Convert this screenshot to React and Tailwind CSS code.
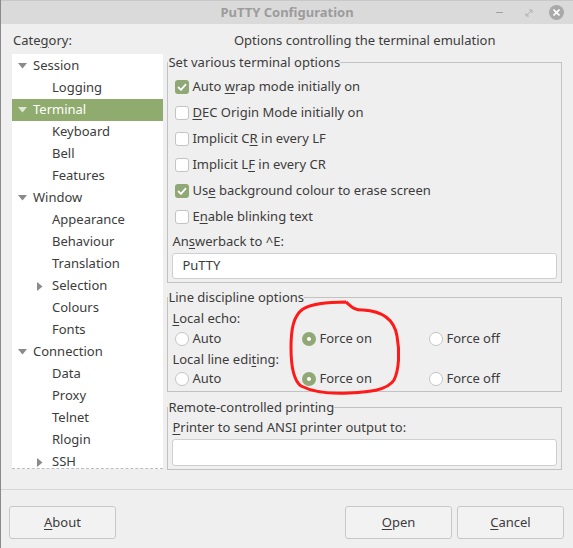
import React from 'react';

const FONT = { fontFamily: '"Noto Sans", "DejaVu Sans", sans-serif' };

function U({ children }) {
  return <span className="underline underline-offset-2">{children}</span>;
}

function Tri({ open }) {
  return open ? (
    <svg width="9" height="6" viewBox="0 0 9 6" className="shrink-0"><path d="M0 0 L9 0 L4.5 5.5 Z" fill="currentColor" /></svg>
  ) : (
    <svg width="6" height="9" viewBox="0 0 6 9" className="shrink-0"><path d="M0 0 L5.5 4.5 L0 9 Z" fill="currentColor" /></svg>
  );
}

const tree = [
  { label: 'Session', lvl: 0, open: true },
  { label: 'Logging', lvl: 1 },
  { label: 'Terminal', lvl: 0, open: true, sel: true },
  { label: 'Keyboard', lvl: 1 },
  { label: 'Bell', lvl: 1 },
  { label: 'Features', lvl: 1 },
  { label: 'Window', lvl: 0, open: true },
  { label: 'Appearance', lvl: 1 },
  { label: 'Behaviour', lvl: 1 },
  { label: 'Translation', lvl: 1 },
  { label: 'Selection', lvl: 1, closed: true },
  { label: 'Colours', lvl: 1 },
  { label: 'Fonts', lvl: 1 },
  { label: 'Connection', lvl: 0, open: true },
  { label: 'Data', lvl: 1 },
  { label: 'Proxy', lvl: 1 },
  { label: 'Telnet', lvl: 1 },
  { label: 'Rlogin', lvl: 1 },
  { label: 'SSH', lvl: 1, closed: true },
];

function Check({ on, children }) {
  return (
    <div className="h-[26px] flex items-center pl-[7px] gap-[3px]">
      {on ? (
        <span className="w-[14px] h-[14px] rounded-[3px] bg-[#8fa876] flex items-center justify-center">
          <svg width="10" height="8" viewBox="0 0 10 8"><path d="M1 4 L4 6.8 L9 1.2" stroke="white" strokeWidth="1.8" fill="none" /></svg>
        </span>
      ) : (
        <span className="w-[14px] h-[14px] rounded-[3px] bg-white border border-[#c4c4c4]" />
      )}
      <span>{children}</span>
    </div>
  );
}

function Radio({ on, children }) {
  return (
    <div className="flex items-center gap-[3px]">
      {on ? (
        <span className="w-[14px] h-[14px] rounded-full bg-[#8fa876] flex items-center justify-center">
          <span className="w-[4px] h-[4px] rounded-full bg-white" />
        </span>
      ) : (
        <span className="w-[14px] h-[14px] rounded-full bg-white border border-[#c4c4c4]" />
      )}
      <span>{children}</span>
    </div>
  );
}

function RadioRow({ className }) {
  return (
    <div className={`grid grid-cols-[127px_127px_127px] pl-[7px] items-center ${className}`}>
      <Radio>Auto</Radio>
      <Radio on>Force on</Radio>
      <Radio>Force off</Radio>
    </div>
  );
}

function Button({ children }) {
  return (
    <div className="h-[33px] w-[107px] rounded-[3px] border border-[#c8c8c8] bg-[#f2f2f2] flex items-center justify-center">
      {children}
    </div>
  );
}

export default function App() {
  return (
    <div className="relative w-[573px] h-[548px] bg-[#efefef] text-[#3c3c3c] text-[13px] overflow-hidden border-l border-[#8a8a8a]" style={FONT}>
      {/* title bar */}
      <div className="h-[24px] bg-[#dadada] border-t border-[#c8c8c8] relative flex items-center justify-center">
        <span className="font-bold text-[#9c9c9c] text-[13px]">PuTTY Configuration</span>
        <div className="absolute right-[9px] top-[4px] flex items-center gap-[16px]">
          <span className="w-[7px] h-[1px] bg-[#a0a0a0] mr-[6px]" />
          <svg width="8" height="8" viewBox="0 0 8 8"><path d="M1 7 L7 1 M4 1 L7 1 L7 4 M1 4 L1 7 L4 7" stroke="#b0b0b0" strokeWidth="1" fill="none" /></svg>
          <span className="w-[15px] h-[15px] rounded-full bg-[#a9a9a9] flex items-center justify-center">
            <svg width="7" height="7" viewBox="0 0 7 7"><path d="M0.5 0.5 L6.5 6.5 M6.5 0.5 L0.5 6.5" stroke="white" strokeWidth="1.6" /></svg>
          </span>
        </div>
      </div>

      <div className="px-[11px]">
        <div className="h-[30px] flex items-end pb-[4px]">
          <div className="w-[156px] pl-px">Cate<U>g</U>ory:</div>
          <div className="w-[396px] text-center">Options controlling the terminal emulation</div>
        </div>

        <div className="flex gap-[4px]">
          {/* tree */}
          <div className="w-[152px] h-[415px] bg-white border-b border-dashed border-[#bdbdbd] pt-[1px]">
            {tree.map(t => (
              <div key={t.label}
                className={`h-[22px] flex items-center ${t.sel ? 'bg-[#8fab6e] text-white' : ''}`}>
                {t.lvl === 0 ? (
                  <div className="flex items-center">
                    <span className={`w-[21px] flex justify-center ${t.sel ? 'text-[#dfe8d5]' : 'text-[#8a8a8a]'}`}><Tri open /></span>
                    <span>{t.label}</span>
                  </div>
                ) : (
                  <div className="flex items-center">
                    <span className="w-[40px] flex justify-end pr-[9px] text-[#8a8a8a]">{t.closed ? <Tri /> : null}</span>
                    <span>{t.label}</span>
                  </div>
                )}
              </div>
            ))}
          </div>

          {/* options */}
          <div className="w-[396px]">
            <fieldset className="border border-[#c2c2c2] h-[229px]">
              <legend className="leading-[17px]">Set various terminal options</legend>
              <div className="pt-[3px]">
                <Check on>Auto <U>w</U>rap mode initially on</Check>
                <Check><U>D</U>EC Origin Mode initially on</Check>
                <Check>Implicit C<U>R</U> in every LF</Check>
                <Check>Implicit L<U>F</U> in every CR</Check>
                <Check on>Us<U>e</U> background colour to erase screen</Check>
                <Check>E<U>n</U>able blinking text</Check>
                <div className="h-[20px] mt-[2px] flex items-center pl-[4px]">An<U>s</U>werback to ^E:</div>
                <div className="mx-[4px] mt-[1px] h-[26px] bg-white border border-[#cfcfcf] rounded-[3px] flex items-center px-[9px]">PuTTY</div>
              </div>
            </fieldset>

            <fieldset className="border border-[#c2c2c2] h-[103px] mt-[6px]">
              <legend className="leading-[17px]">Line discipline options</legend>
              <div className="pt-[3px]">
                <div className="h-[20px] flex items-center pl-[4px]"><U>L</U>ocal echo:</div>
                <RadioRow className="h-[18px]" />
                <div className="h-[22px] pt-[4px] flex items-center pl-[4px]">Local line edi<U>t</U>ing:</div>
                <RadioRow className="h-[20px]" />
              </div>
            </fieldset>

            <fieldset className="border border-[#c2c2c2] h-[71px] mt-[7px]">
              <legend className="leading-[17px]">Remote-controlled printing</legend>
              <div className="pt-[2px]">
                <div className="h-[20px] flex items-center pl-[4px]"><U>P</U>rinter to send ANSI printer output to:</div>
                <div className="mx-[4px] mt-[1px] h-[27px] bg-white border border-[#cfcfcf] rounded-[3px]" />
              </div>
            </fieldset>
          </div>
        </div>
      </div>

      <div className="mt-[19px] border-t border-[#d6d6d6]" />

      <div className="flex px-[8px] pt-[16px]">
        <Button><U>A</U>bout</Button>
        <div className="flex-1" />
        <div className="flex gap-[5px] mr-[1px]">
          <Button><U>O</U>pen</Button>
          <Button><U>C</U>ancel</Button>
        </div>
      </div>

      {/* hand-drawn annotation */}
      <svg className="absolute left-0 top-0 pointer-events-none" width="573" height="548">
        <path d="M345 302 C350 306 352 310 362 310 C380 311 393 318 396 336 C399 352 398 370 393 380 C386 391 366 392 348 393 C330 394 312 392 300 386 C292 380 290 366 290 348 C290 330 292 316 302 309 C312 303 330 302 345 302"
          stroke="#ff1a1a" strokeWidth="3" fill="none" strokeLinejoin="round" />
      </svg>
    </div>
  );
}
